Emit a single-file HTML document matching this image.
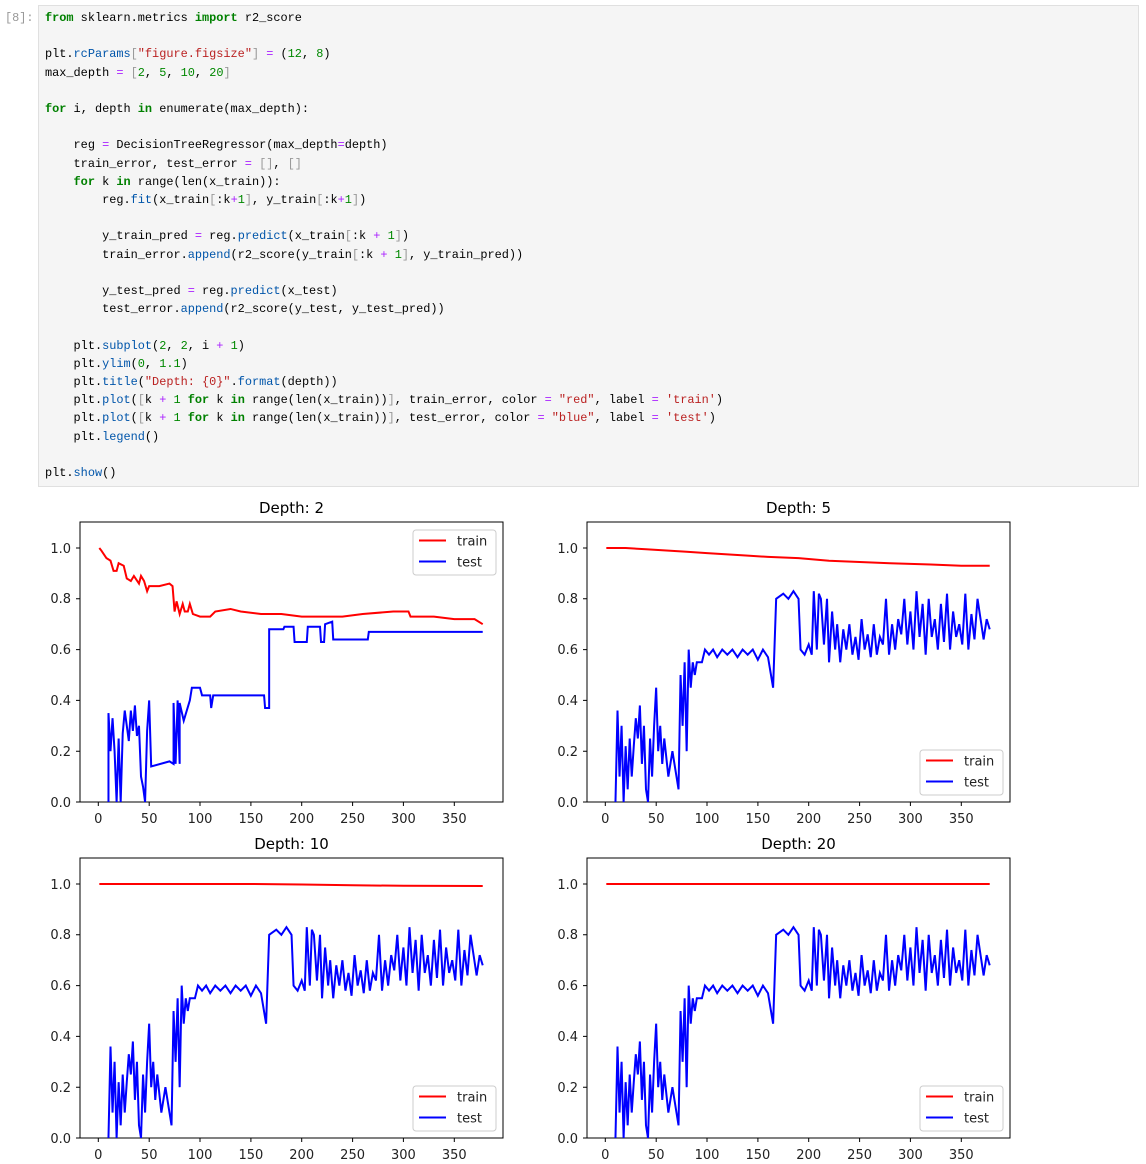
<!DOCTYPE html>
<html><head><meta charset="utf-8"><style>
body{margin:0;width:1146px;height:1164px;background:#fff;position:relative;overflow:hidden}
.cell{position:absolute;left:38px;top:5px;width:1099px;height:480px;background:#f5f5f5;border:1px solid #e0e0e0}
.prompt{position:absolute;left:5px;top:11px;font:11.9px "Liberation Mono",monospace;color:#999}
pre{position:absolute;left:45px;top:9px;margin:0;font:11.9px/18.2px "Liberation Mono",monospace;color:#000}
.k{color:#008000;font-weight:bold}.s{color:#ba2121}.n{color:#080}.o{color:#a2f}.p{color:#05a}.b{color:#999}
svg{position:absolute;left:0;top:0}
svg text{font-family:"DejaVu Sans",sans-serif;font-size:13px;fill:#222}
.t{font-size:15px!important;fill:#000!important}
</style></head><body>
<div class="cell"></div>
<div class="prompt">[8]:</div>
<pre><span class="k">from</span> sklearn.metrics <span class="k">import</span> r2_score

plt.<span class="p">rcParams</span><span class="b">[</span><span class="s">"figure.figsize"</span><span class="b">]</span> <span class="o">=</span> (<span class="n">12</span>, <span class="n">8</span>)
max_depth <span class="o">=</span> <span class="b">[</span><span class="n">2</span>, <span class="n">5</span>, <span class="n">10</span>, <span class="n">20</span><span class="b">]</span>

<span class="k">for</span> i, depth <span class="k">in</span> enumerate(max_depth):

    reg <span class="o">=</span> DecisionTreeRegressor(max_depth<span class="o">=</span>depth)
    train_error, test_error <span class="o">=</span> <span class="b">[]</span>, <span class="b">[]</span>
    <span class="k">for</span> k <span class="k">in</span> range(len(x_train)):
        reg.<span class="p">fit</span>(x_train<span class="b">[</span>:k<span class="o">+</span><span class="n">1</span><span class="b">]</span>, y_train<span class="b">[</span>:k<span class="o">+</span><span class="n">1</span><span class="b">]</span>)

        y_train_pred <span class="o">=</span> reg.<span class="p">predict</span>(x_train<span class="b">[</span>:k <span class="o">+</span> <span class="n">1</span><span class="b">]</span>)
        train_error.<span class="p">append</span>(r2_score(y_train<span class="b">[</span>:k <span class="o">+</span> <span class="n">1</span><span class="b">]</span>, y_train_pred))

        y_test_pred <span class="o">=</span> reg.<span class="p">predict</span>(x_test)
        test_error.<span class="p">append</span>(r2_score(y_test, y_test_pred))

    plt.<span class="p">subplot</span>(<span class="n">2</span>, <span class="n">2</span>, i <span class="o">+</span> <span class="n">1</span>)
    plt.<span class="p">ylim</span>(<span class="n">0</span>, <span class="n">1.1</span>)
    plt.<span class="p">title</span>(<span class="s">"Depth: {0}"</span>.<span class="p">format</span>(depth))
    plt.<span class="p">plot</span>(<span class="b">[</span>k <span class="o">+</span> <span class="n">1</span> <span class="k">for</span> k <span class="k">in</span> range(len(x_train))<span class="b">]</span>, train_error, color <span class="o">=</span> <span class="s">"red"</span>, label <span class="o">=</span> <span class="s">'train'</span>)
    plt.<span class="p">plot</span>(<span class="b">[</span>k <span class="o">+</span> <span class="n">1</span> <span class="k">for</span> k <span class="k">in</span> range(len(x_train))<span class="b">]</span>, test_error, color <span class="o">=</span> <span class="s">"blue"</span>, label <span class="o">=</span> <span class="s">'test'</span>)
    plt.<span class="p">legend</span>()

plt.<span class="p">show</span>()</pre>

<svg width="1146" height="1164" xmlns="http://www.w3.org/2000/svg">
<defs>
<polyline id="tst" fill="none" stroke="#00f" stroke-width="2" vector-effect="non-scaling-stroke" points="10,0 12,0.36 14,0.1 16,0.3 18,0 20,0.22 22,0.05 24,0.25 26,0.1 28,0.22 30,0.33 32,0.25 34,0.38 36,0.15 38,0.3 40,0.05 42,0 44,0.25 46,0.1 48,0.3 50,0.45 52,0.2 54,0.3 56,0.15 58,0.25 62,0.1 66,0.2 70,0.1 72,0.05 74,0.5 76,0.3 78,0.55 80,0.2 82,0.6 84,0.45 86,0.55 88,0.5 90,0.55 95,0.55 98,0.6 102,0.58 106,0.6 110,0.57 115,0.6 120,0.58 125,0.6 130,0.57 135,0.6 140,0.58 145,0.6 150,0.56 155,0.6 160,0.57 165,0.45 168,0.8 175,0.82 180,0.8 185,0.83 190,0.8 192,0.6 196,0.58 200,0.62 203,0.58 205,0.83 208,0.6 210,0.82 212,0.8 215,0.62 218,0.8 220,0.55 223,0.75 226,0.6 228,0.7 231,0.55 234,0.68 237,0.6 240,0.7 243,0.58 246,0.65 249,0.56 252,0.72 255,0.6 258,0.66 261,0.57 264,0.7 267,0.58 270,0.65 273,0.62 276,0.8 279,0.58 282,0.7 285,0.6 288,0.72 291,0.66 294,0.8 297,0.62 300,0.75 303,0.6 306,0.83 309,0.65 312,0.78 315,0.58 318,0.8 321,0.65 324,0.72 327,0.6 330,0.78 333,0.63 336,0.82 339,0.6 342,0.75 345,0.65 348,0.7 351,0.62 354,0.82 357,0.6 360,0.74 363,0.64 366,0.8 369,0.72 372,0.64 375,0.72 378,0.68"/>
<g id="frame" stroke="#000" stroke-width="1" fill="none">
<rect x="0" y="0" width="423" height="280"/>
<path d="M18.3 280v4M69.2 280v4M120 280v4M170.9 280v4M221.7 280v4M272.6 280v4M323.4 280v4M374.3 280v4M0 280h-4M0 229.2h-4M0 178.4h-4M0 127.6h-4M0 76.8h-4M0 26h-4"/>
</g>
</defs>

<g transform="translate(80,522)">
<use href="#frame"/>
<g transform="translate(18.3,280) scale(1.017,-254)">
<polyline stroke="#f00" stroke-width="2" vector-effect="non-scaling-stroke" fill="none" points="1,1.0 3,0.99 8,0.96 12,0.95 15,0.91 18,0.91 20,0.94 25,0.93 28,0.88 32,0.87 35,0.89 40,0.86 42,0.89 45,0.87 48,0.83 50,0.85 60,0.85 70,0.86 73,0.85 75,0.75 77,0.79 80,0.74 83,0.78 85,0.75 88,0.75 90,0.78 93,0.74 100,0.73 110,0.73 115,0.75 130,0.76 140,0.75 160,0.74 180,0.74 200,0.73 220,0.73 240,0.73 260,0.74 290,0.75 305,0.75 307,0.73 330,0.73 350,0.72 370,0.72 378,0.70"/>
<polyline stroke="#00f" stroke-width="2" vector-effect="non-scaling-stroke" fill="none" points="10,0 10,0.35 12,0.2 14,0.33 16,0.2 18,0 20,0.25 22,0 24,0.27 26,0.36 28,0.3 30,0.24 32,0.36 34,0.28 36,0.38 38,0.26 40,0.3 42,0.1 44,0.06 46,0 48,0.28 50,0.4 52,0.14 70,0.16 74,0.15 74,0.39 76,0.15 78,0.4 80,0.15 80,0.39 84,0.32 90,0.4 92,0.45 100,0.45 102,0.42 110,0.42 111,0.37 113,0.42 130,0.42 163,0.42 164,0.37 168,0.37 168,0.68 182,0.68 183,0.69 192,0.69 193,0.63 205,0.63 206,0.69 218,0.69 219,0.63 222,0.63 223,0.7 230,0.71 231,0.64 265,0.64 266,0.67 370,0.67 378,0.67"/>
</g>
<text class="t" x="211.5" y="-9" text-anchor="middle">Depth: 2</text>
<rect x="333" y="8" width="83" height="45" rx="3" fill="#fff" fill-opacity="0.8" stroke="#ccc"/>
<path d="M339 18.5h27" stroke="#f00" stroke-width="2"/><path d="M339 39.5h27" stroke="#00f" stroke-width="2"/>
<text x="377" y="23.5">train</text><text x="377" y="44.5">test</text>
<g text-anchor="middle"><text x="18.3" y="301">0</text><text x="69.2" y="301">50</text><text x="120" y="301">100</text><text x="170.9" y="301">150</text><text x="221.7" y="301">200</text><text x="272.6" y="301">250</text><text x="323.4" y="301">300</text><text x="374.3" y="301">350</text></g>
<g text-anchor="end"><text x="-9" y="285">0.0</text><text x="-9" y="234">0.2</text><text x="-9" y="183">0.4</text><text x="-9" y="132">0.6</text><text x="-9" y="81">0.8</text><text x="-9" y="31">1.0</text></g>
</g>

<g transform="translate(587,522)">
<use href="#frame"/>
<g transform="translate(18.3,280) scale(1.017,-254)">
<polyline stroke="#f00" stroke-width="2" vector-effect="non-scaling-stroke" fill="none" points="1,1.0 20,1.0 40,0.995 60,0.99 80,0.985 100,0.98 120,0.975 140,0.97 160,0.965 190,0.96 220,0.95 250,0.945 280,0.94 320,0.935 350,0.93 378,0.93"/>
<use href="#tst"/>
</g>
<text class="t" x="211.5" y="-9" text-anchor="middle">Depth: 5</text>
<rect x="333" y="228" width="83" height="45" rx="3" fill="#fff" fill-opacity="0.8" stroke="#ccc"/>
<path d="M339 238.5h27" stroke="#f00" stroke-width="2"/><path d="M339 259.5h27" stroke="#00f" stroke-width="2"/>
<text x="377" y="243.5">train</text><text x="377" y="264.5">test</text>
<g text-anchor="middle"><text x="18.3" y="301">0</text><text x="69.2" y="301">50</text><text x="120" y="301">100</text><text x="170.9" y="301">150</text><text x="221.7" y="301">200</text><text x="272.6" y="301">250</text><text x="323.4" y="301">300</text><text x="374.3" y="301">350</text></g>
<g text-anchor="end"><text x="-9" y="285">0.0</text><text x="-9" y="234">0.2</text><text x="-9" y="183">0.4</text><text x="-9" y="132">0.6</text><text x="-9" y="81">0.8</text><text x="-9" y="31">1.0</text></g>
</g>

<g transform="translate(80,858)">
<use href="#frame"/>
<g transform="translate(18.3,280) scale(1.017,-254)">
<polyline stroke="#f00" stroke-width="2" vector-effect="non-scaling-stroke" fill="none" points="1,1.0 150,1.0 200,0.998 250,0.995 300,0.993 378,0.992"/>
<use href="#tst"/>
</g>
<text class="t" x="211.5" y="-9" text-anchor="middle">Depth: 10</text>
<rect x="333" y="228" width="83" height="45" rx="3" fill="#fff" fill-opacity="0.8" stroke="#ccc"/>
<path d="M339 238.5h27" stroke="#f00" stroke-width="2"/><path d="M339 259.5h27" stroke="#00f" stroke-width="2"/>
<text x="377" y="243.5">train</text><text x="377" y="264.5">test</text>
<g text-anchor="middle"><text x="18.3" y="301">0</text><text x="69.2" y="301">50</text><text x="120" y="301">100</text><text x="170.9" y="301">150</text><text x="221.7" y="301">200</text><text x="272.6" y="301">250</text><text x="323.4" y="301">300</text><text x="374.3" y="301">350</text></g>
<g text-anchor="end"><text x="-9" y="285">0.0</text><text x="-9" y="234">0.2</text><text x="-9" y="183">0.4</text><text x="-9" y="132">0.6</text><text x="-9" y="81">0.8</text><text x="-9" y="31">1.0</text></g>
</g>

<g transform="translate(587,858)">
<use href="#frame"/>
<g transform="translate(18.3,280) scale(1.017,-254)">
<polyline stroke="#f00" stroke-width="2" vector-effect="non-scaling-stroke" fill="none" points="1,1.0 378,1.0"/>
<use href="#tst"/>
</g>
<text class="t" x="211.5" y="-9" text-anchor="middle">Depth: 20</text>
<rect x="333" y="228" width="83" height="45" rx="3" fill="#fff" fill-opacity="0.8" stroke="#ccc"/>
<path d="M339 238.5h27" stroke="#f00" stroke-width="2"/><path d="M339 259.5h27" stroke="#00f" stroke-width="2"/>
<text x="377" y="243.5">train</text><text x="377" y="264.5">test</text>
<g text-anchor="middle"><text x="18.3" y="301">0</text><text x="69.2" y="301">50</text><text x="120" y="301">100</text><text x="170.9" y="301">150</text><text x="221.7" y="301">200</text><text x="272.6" y="301">250</text><text x="323.4" y="301">300</text><text x="374.3" y="301">350</text></g>
<g text-anchor="end"><text x="-9" y="285">0.0</text><text x="-9" y="234">0.2</text><text x="-9" y="183">0.4</text><text x="-9" y="132">0.6</text><text x="-9" y="81">0.8</text><text x="-9" y="31">1.0</text></g>
</g>
</svg>
</body></html>
